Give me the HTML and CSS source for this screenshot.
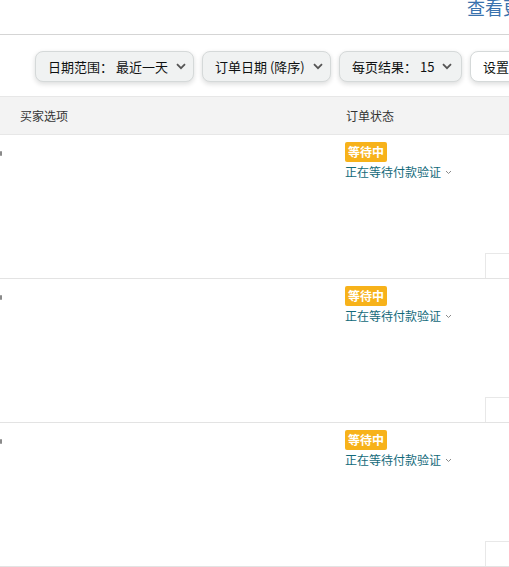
FILE: index.html
```html
<!DOCTYPE html>
<html lang="zh">
<head>
<meta charset="utf-8">
<link rel="stylesheet" href="styles.css">
</head>
<body>
<div class="page">
  <div class="topbar">
    <a class="more-link">查看更多订单</a>
  </div>
  <div class="filters">
    <button class="dropdown w1">日期范围： 最近一天<span class="chev"><svg width="10" height="7" viewBox="0 0 10 7"><path d="M1 1.2 L5 5.2 L9 1.2" fill="none" stroke="#555" stroke-width="1.8"/></svg></span></button>
    <button class="dropdown w2">订单日期 (降序)<span class="chev"><svg width="10" height="7" viewBox="0 0 10 7"><path d="M1 1.2 L5 5.2 L9 1.2" fill="none" stroke="#555" stroke-width="1.8"/></svg></span></button>
    <button class="dropdown w3">每页结果： 15<span class="chev"><svg width="10" height="7" viewBox="0 0 10 7"><path d="M1 1.2 L5 5.2 L9 1.2" fill="none" stroke="#555" stroke-width="1.8"/></svg></span></button>
    <button class="dropdown plain">设置</button>
  </div>
  <div class="table">
    <div class="thead">
      <div class="col-buyer">买家选项</div>
      <div class="col-status">订单状态</div>
    </div>
    <div class="row">
      <div class="col-buyer"><span class="edge-mark"></span></div>
      <div class="col-status">
        <span class="badge">等待中</span>
        <div class="status-text">正在等待付款验证<span class="small-chev"><svg width="7" height="5" viewBox="0 0 7 5"><path d="M1 1 L3.5 3.5 L6 1" fill="none" stroke="#8a8a8a" stroke-width="1"/></svg></span></div>
      </div>
      <div class="col-action"><span class="action-box"></span></div>
    </div>
    <div class="row">
      <div class="col-buyer"><span class="edge-mark"></span></div>
      <div class="col-status">
        <span class="badge">等待中</span>
        <div class="status-text">正在等待付款验证<span class="small-chev"><svg width="7" height="5" viewBox="0 0 7 5"><path d="M1 1 L3.5 3.5 L6 1" fill="none" stroke="#8a8a8a" stroke-width="1"/></svg></span></div>
      </div>
      <div class="col-action"><span class="action-box"></span></div>
    </div>
    <div class="row">
      <div class="col-buyer"><span class="edge-mark"></span></div>
      <div class="col-status">
        <span class="badge">等待中</span>
        <div class="status-text">正在等待付款验证<span class="small-chev"><svg width="7" height="5" viewBox="0 0 7 5"><path d="M1 1 L3.5 3.5 L6 1" fill="none" stroke="#8a8a8a" stroke-width="1"/></svg></span></div>
      </div>
      <div class="col-action"><span class="action-box"></span></div>
    </div>
  </div>
</div>
</body>
</html>
```
FILE: styles.css
```css
html, body {
  margin: 0;
  padding: 0;
  background: #fff;
}
body {
  font-family: "Noto Sans CJK SC", "Noto Sans", sans-serif;
  color: #111;
  width: 509px;
  height: 567px;
  overflow: hidden;
}
.page {
  width: 509px;
  overflow: hidden;
}
.topbar {
  height: 34px;
  border-bottom: 1px solid #d5d5d5;
  padding-left: 467px;
  white-space: nowrap;
  overflow: hidden;
}
.more-link {
  display: block;
  font-size: 18px;
  line-height: 18px;
  margin-top: -2px;
  color: #3a72ad;
  white-space: nowrap;
}
.filters {
  display: flex;
  flex-wrap: nowrap;
  gap: 8px;
  padding: 16px 0 0 35px;
  height: 45px;
  border-bottom: 1px solid #e7e7e7;
  white-space: nowrap;
}
.dropdown {
  flex: none;
  height: 31px;
  box-sizing: border-box;
  border: 1px solid #d5d9d9;
  border-radius: 8px;
  background: #f0f2f2;
  box-shadow: 0 2px 5px rgba(15, 17, 17, 0.15);
  font-family: inherit;
  font-size: 13px;
  color: #0f1111;
  padding: 0 0 0 12px;
  display: flex;
  align-items: center;
  text-align: left;
}
.w1 { width: 159px; }
.w2 { width: 129px; }
.w3 { width: 123px; }
.plain {
  background: #fff;
  width: 80px;
}
.chev {
  display: inline-flex;
  margin-left: 8px;
}
.thead {
  display: flex;
  height: 37px;
  align-items: center;
  background: #f3f3f3;
  border-bottom: 1px solid #e7e7e7;
  font-size: 12px;
  color: #333;
}
.col-buyer {
  width: 326px;
  padding-left: 20px;
  box-sizing: border-box;
  flex: none;
}
.col-status {
  flex: 1;
  box-sizing: border-box;
}
.thead .col-status {
  padding-left: 20px;
}
.row {
  display: flex;
  height: 143px;
  border-bottom: 1px solid #e3e3e3;
}
.row .col-buyer {
  padding-left: 0;
  padding-top: 16px;
}
.edge-mark {
  display: block;
  width: 2px;
  height: 5px;
  background: #8a8a8a;
  border-radius: 1px;
}
.row .col-status {
  padding-top: 7px;
  padding-left: 19px;
  display: flex;
  flex-direction: column;
  align-items: flex-start;
}
.badge {
  display: block;
  background: #f7b21a;
  color: #fff;
  font-weight: bold;
  font-size: 12px;
  line-height: 20px;
  height: 20px;
  padding: 0 3px;
  border-radius: 2px;
}
.status-text {
  margin-top: 2px;
  font-size: 12px;
  line-height: 16px;
  color: #136a7a;
  display: flex;
  align-items: center;
  white-space: nowrap;
}
.small-chev {
  display: inline-flex;
  margin-left: 4px;
}
.col-action {
  width: 24px;
  flex: none;
  display: flex;
  align-items: flex-end;
}
.action-box {
  display: block;
  width: 24px;
  height: 25px;
  border-top: 1px solid #e8e8e8;
  border-left: 1px solid #e8e8e8;
  box-sizing: border-box;
}
```
